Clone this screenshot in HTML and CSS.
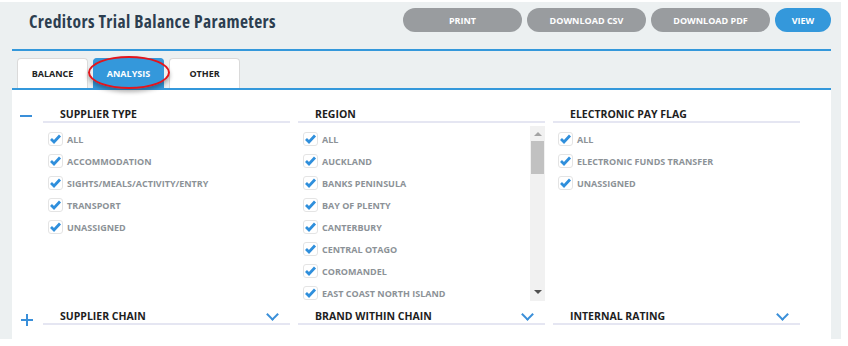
FILE: index.html
```html
<!DOCTYPE html>
<html lang="en">

<head>
  <meta charset="UTF-8">
  <meta name="viewport" content="width=device-width, initial-scale=1.0">
  <title>Creditors Trial Balance Parameters</title>
  <link rel="stylesheet" href="styles.css">
</head>

<body>

  <div class="page">
    <header class="top">
      <h1>Creditors Trial Balance Parameters</h1>
      <div class="actions">
        <button class="btn btn-wide">PRINT</button>
        <button class="btn btn-wide">DOWNLOAD CSV</button>
        <button class="btn btn-wide">DOWNLOAD PDF</button>
        <button class="btn btn-primary">VIEW</button>
      </div>
    </header>

    <nav class="tabs">
      <a class="tab">BALANCE</a>
      <a class="tab active">ANALYSIS</a>
      <a class="tab">OTHER</a>
      <span class="highlight"></span>
    </nav>

    <div class="panel">
      <!-- expanded group -->
      <div class="section">
        <span class="toggle">
          <svg width="12" height="12" viewBox="0 0 12 12"><path d="M0 6h12" stroke="#3a8fd9" stroke-width="2"/></svg>
        </span>
        <div class="cols">
          <div class="col">
            <div class="col-head">SUPPLIER TYPE</div>
            <ul class="checks">
              <li><span class="box"></span>ALL</li>
              <li><span class="box"></span>ACCOMMODATION</li>
              <li><span class="box"></span>SIGHTS/MEALS/ACTIVITY/ENTRY</li>
              <li><span class="box"></span>TRANSPORT</li>
              <li><span class="box"></span>UNASSIGNED</li>
            </ul>
          </div>
          <div class="col">
            <div class="col-head">REGION</div>
            <div class="list-box">
              <ul class="checks">
                <li><span class="box"></span>ALL</li>
                <li><span class="box"></span>AUCKLAND</li>
                <li><span class="box"></span>BANKS PENINSULA</li>
                <li><span class="box"></span>BAY OF PLENTY</li>
                <li><span class="box"></span>CANTERBURY</li>
                <li><span class="box"></span>CENTRAL OTAGO</li>
                <li><span class="box"></span>COROMANDEL</li>
                <li><span class="box"></span>EAST COAST NORTH ISLAND</li>
              </ul>
              <div class="scrollbar">
                <span class="arrow-up"></span>
                <span class="thumb"></span>
                <span class="arrow-down"></span>
              </div>
            </div>
          </div>
          <div class="col">
            <div class="col-head">ELECTRONIC PAY FLAG</div>
            <ul class="checks">
              <li><span class="box"></span>ALL</li>
              <li><span class="box"></span>ELECTRONIC FUNDS TRANSFER</li>
              <li><span class="box"></span>UNASSIGNED</li>
            </ul>
          </div>
        </div>
      </div>

      <!-- collapsed group -->
      <div class="section collapsed">
        <span class="toggle">
          <svg width="12" height="12" viewBox="0 0 12 12"><path d="M0 6h12M6 0v12" stroke="#3a8fd9" stroke-width="2"/></svg>
        </span>
        <div class="cols">
          <div class="col">
            <div class="col-head">SUPPLIER CHAIN<span class="chevron"></span></div>
          </div>
          <div class="col">
            <div class="col-head">BRAND WITHIN CHAIN<span class="chevron"></span></div>
          </div>
          <div class="col">
            <div class="col-head">INTERNAL RATING<span class="chevron"></span></div>
          </div>
        </div>
      </div>
    </div>
  </div>

</body>

</html>
```

FILE: styles.css
```css
body {
  font-family: 'Open Sans', 'Noto Sans', sans-serif;
  background-color: #ffffff;
  margin: 0;
  padding: 0;
}

.page {
  margin-top: 2px;
  width: 841px;
  height: 337px;
  padding: 0 10px 0 12px;
  box-sizing: border-box;
  background-color: #ecf0f1;
  overflow: hidden;
}

.top {
  display: flex;
  justify-content: space-between;
  align-items: flex-start;
  height: 47px;
  padding-left: 17px;
  border-bottom: 2px solid #3498db;
}

h1 {
  margin: 0;
  padding-top: 7px;
  font-size: 17.5px;
  font-stretch: 87.5%;
  letter-spacing: 0.4px;
  line-height: 24px;
  color: #2c3e50;
}

.actions {
  display: flex;
  gap: 5px;
  margin-top: 6px;
}

.btn {
  height: 24px;
  border: none;
  border-radius: 12px;
  background-color: #999c9f;
  color: white;
  font-family: inherit;
  font-size: 9px;
  font-weight: 700;
  padding: 0;
  cursor: pointer;
}

.btn-wide {
  width: 119px;
}

.btn-primary {
  width: 56px;
  background-color: #3498db;
}

.tabs {
  position: relative;
  display: flex;
  gap: 5px;
  padding: 7px 0 0 5px;
  border-bottom: 2px solid #3498db;
}

.tab {
  width: 71px;
  height: 30px;
  box-sizing: border-box;
  display: flex;
  align-items: center;
  justify-content: center;
  background-color: white;
  border: 1px solid #dadada;
  border-bottom: none;
  border-radius: 4px 4px 0 0;
  font-size: 9px;
  font-weight: 700;
  color: #222;
}

.tab.active {
  background-color: #3498db;
  border-color: #3498db;
  color: white;
}

.highlight {
  position: absolute;
  left: 76px;
  top: 5px;
  width: 82px;
  height: 33px;
  box-sizing: border-box;
  border: 2px solid #e3151c;
  border-radius: 50%;
  box-shadow: 0 3px 4px rgba(0, 0, 0, 0.3);
}

.panel {
  background-color: white;
  height: 260px;
  padding-top: 15px;
}

.section {
  display: flex;
}

.section.collapsed {
  margin-top: 5px;
}

.toggle {
  width: 23px;
  padding-left: 8px;
  padding-top: 5px;
  line-height: 0;
}

.collapsed .toggle {
  padding-left: 9px;
  width: 22px;
  padding-top: 8px;
}

.cols {
  display: grid;
  grid-template-columns: 247px 247px 247px;
  gap: 8px;
}

.col-head {
  display: flex;
  justify-content: space-between;
  align-items: center;
  padding: 3px 11px 0 17px;
  line-height: 13px;
  font-size: 10.5px;
  font-weight: 700;
  color: #1e1e1e;
  border-bottom: 2px solid #e5e6f2;
}

.collapsed .col-head {
  padding-top: 4px;
}

.chevron {
  width: 7px;
  height: 7px;
  margin-right: 2px;
  margin-top: -4px;
  border-right: 2px solid #3a8fd9;
  border-bottom: 2px solid #3a8fd9;
  transform: rotate(45deg);
}

.checks {
  list-style-type: none;
  margin: 3px 0 0;
  padding: 2px 0 0 5px;
}

.checks li {
  height: 22px;
  display: flex;
  align-items: center;
  font-size: 9px;
  font-weight: 700;
  color: #8c9297;
  white-space: nowrap;
}

.box {
  width: 15px;
  height: 14px;
  box-sizing: border-box;
  margin-right: 4px;
  border: 1px solid #e4e4e4;
  border-radius: 3px;
  background: white url("data:image/svg+xml;utf8,<svg xmlns='http://www.w3.org/2000/svg' width='13' height='12' viewBox='0 0 13 12'><path d='M2 6 L5 9 L11 2.5' fill='none' stroke='%232f8fdc' stroke-width='2.8'/></svg>") center no-repeat;
}

.list-box {
  display: flex;
  height: 175px;
  margin-top: 3px;
  overflow: hidden;
}

.list-box .checks {
  flex: 1;
  margin: 0;
}

.scrollbar {
  width: 15px;
  display: flex;
  flex-direction: column;
  align-items: center;
  background-color: #f1f1f1;
}

.arrow-up,
.arrow-down {
  width: 0;
  height: 0;
  border-left: 4px solid transparent;
  border-right: 4px solid transparent;
}

.arrow-up {
  margin-top: 6px;
  border-bottom: 4px solid #a3a3a3;
}

.thumb {
  width: 13px;
  height: 33px;
  margin-top: 5px;
  background-color: #c1c1c1;
}

.arrow-down {
  margin-top: auto;
  margin-bottom: 7px;
  border-top: 4px solid #505050;
}
```
